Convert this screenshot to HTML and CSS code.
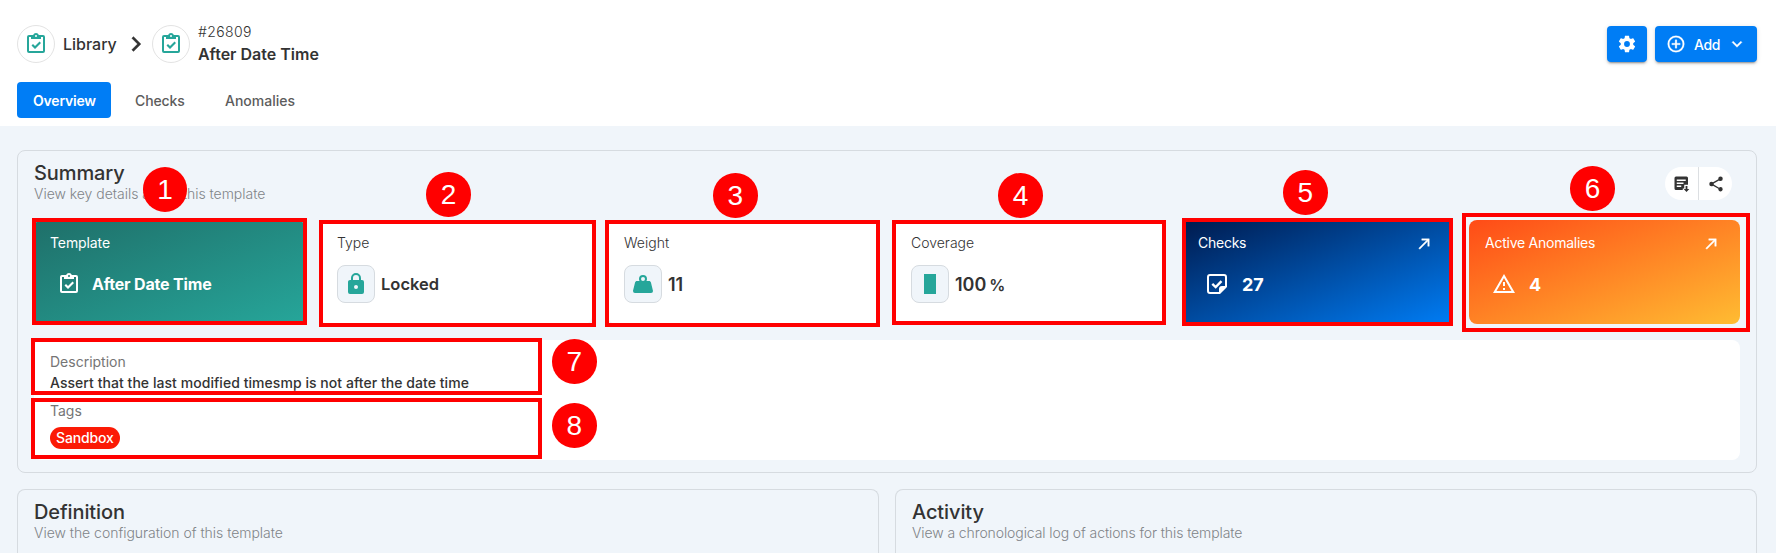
FILE: index.html
```html
<!DOCTYPE html>
<html lang="en">
<head>
<meta charset="utf-8">
<title>After Date Time</title>
<link rel="stylesheet" href="styles.css">
</head>
<body>
<svg class="defs" aria-hidden="true">
  <symbol id="clipboard" viewBox="0 0 24 24"><path d="M19,3H14.82C14.4,1.84 13.3,1 12,1C10.7,1 9.6,1.84 9.18,3H5A2,2 0 0,0 3,5V19A2,2 0 0,0 5,21H19A2,2 0 0,0 21,19V5A2,2 0 0,0 19,3M12,3A1,1 0 0,1 13,4A1,1 0 0,1 12,5A1,1 0 0,1 11,4A1,1 0 0,1 12,3M7,7H17V5H19V19H5V5H7V7M7.5,13.5L9,12L11,14L15.5,9.5L17,11L11,17L7.5,13.5Z"/></symbol>
  <symbol id="arrow" viewBox="0 0 24 24"><path d="M5,17.59L15.59,7H9V5H19V15H17V8.41L6.41,19L5,17.59Z" stroke="currentColor" stroke-width=".5"/></symbol>
</svg>
<header class="header">
  <div class="topbar">
    <nav class="crumbs">
      <span class="avatar"><svg class="i24"><use href="#clipboard"/></svg></span>
      <span class="crumb-label">Library</span>
      <svg class="crumb-sep" viewBox="0 0 24 24"><path d="M8.59,16.58L13.17,12L8.59,7.41L10,6L16,12L10,18L8.59,16.58Z" stroke="currentColor" stroke-width=".2"/></svg>
      <span class="avatar"><svg class="i24"><use href="#clipboard"/></svg></span>
      <div class="ident"><span class="ident-id">#26809</span><span class="ident-name">After Date Time</span></div>
    </nav>
    <div class="actions">
      <button class="btn btn-cog"><svg class="i20" viewBox="0 0 24 24"><path d="M12,15.5A3.5,3.5 0 0,1 8.5,12A3.5,3.5 0 0,1 12,8.5A3.5,3.5 0 0,1 15.5,12A3.5,3.5 0 0,1 12,15.5M19.43,12.97C19.47,12.65 19.5,12.33 19.5,12C19.5,11.67 19.47,11.34 19.43,11L21.54,9.37C21.73,9.22 21.78,8.95 21.66,8.73L19.66,5.27C19.54,5.05 19.27,4.96 19.05,5.05L16.56,6.05C16.04,5.66 15.5,5.32 14.87,5.07L14.5,2.42C14.46,2.18 14.25,2 14,2H10C9.75,2 9.54,2.18 9.5,2.42L9.13,5.07C8.5,5.32 7.96,5.66 7.44,6.05L4.95,5.05C4.73,4.96 4.46,5.05 4.34,5.27L2.34,8.73C2.21,8.95 2.27,9.22 2.46,9.37L4.57,11C4.53,11.34 4.5,11.67 4.5,12C4.5,12.33 4.53,12.65 4.57,12.97L2.46,14.63C2.27,14.78 2.21,15.05 2.34,15.27L4.34,18.73C4.46,18.95 4.73,19.03 4.95,18.95L7.44,17.94C7.96,18.34 8.5,18.68 9.13,18.93L9.5,21.58C9.54,21.82 9.75,22 10,22H14C14.25,22 14.46,21.82 14.5,21.58L14.87,18.93C15.5,18.67 16.04,18.34 16.56,17.94L19.05,18.95C19.27,19.03 19.54,18.95 19.66,18.73L21.66,15.27C21.78,15.05 21.73,14.78 21.54,14.63L19.43,12.97Z"/></svg></button>
      <button class="btn btn-add"><svg class="i20" viewBox="0 0 24 24"><path d="M12,20C7.59,20 4,16.41 4,12C4,7.59 7.59,4 12,4C16.41,4 20,7.59 20,12C20,16.41 16.41,20 12,20M12,2A10,10 0 0,0 2,12A10,10 0 0,0 12,22A10,10 0 0,0 22,12A10,10 0 0,0 12,2M13,7H11V11H7V13H11V17H13V13H17V11H13V7Z" stroke="currentColor" stroke-width=".3"/></svg><span class="add-label">Add</span><svg class="i20" viewBox="0 0 24 24"><path d="M7.41,8.58L12,13.17L16.59,8.58L18,10L12,16L6,10L7.41,8.58Z" stroke="currentColor" stroke-width=".4"/></svg></button>
    </div>
  </div>
  <div class="tabs">
    <span class="tab tab-active">Overview</span><span class="tab tab-checks">Checks</span><span class="tab tab-anom">Anomalies</span>
  </div>
</header>
<main class="main">
  <section class="panel summary">
    <div class="panel-head">
      <div>
        <h2 class="title t-summary">Summary</h2>
        <p class="sub s-summary">View key details about this template</p>
      </div>
      <div class="pill">
        <span class="pill-btn"><svg class="i18" viewBox="0 0 24 24"><path fill-rule="evenodd" d="M4,2H18A2,2 0 0 1 20,4V13H15V18H13V20H4A2,2 0 0 1 2,18V4A2,2 0 0 1 4,2M5,6V8H17V6H5M5,10V12H14V10H5M5,14V16H11V14H5M16.8,14.5H19.2V18.5H21.8L18,22.5L14.2,18.5H16.8Z"/></svg></span>
        <span class="pill-btn"><svg class="i18" viewBox="0 0 24 24"><path d="M18,16.08C17.24,16.08 16.56,16.38 16.04,16.85L8.91,12.7C8.96,12.47 9,12.24 9,12C9,11.76 8.96,11.53 8.91,11.3L15.96,7.19C16.5,7.69 17.21,8 18,8A3,3 0 0,0 21,5A3,3 0 0,0 18,2A3,3 0 0,0 15,5C15,5.24 15.04,5.47 15.09,5.7L8.04,9.81C7.5,9.31 6.79,9 6,9A3,3 0 0,0 3,12A3,3 0 0,0 6,15C6.79,15 7.5,14.69 8.04,14.19L15.16,18.34C15.11,18.55 15.08,18.77 15.08,19C15.08,20.61 16.39,21.91 18,21.91C19.61,21.91 20.92,20.61 20.92,19A2.92,2.92 0 0,0 18,16.08Z"/></svg></span>
      </div>
    </div>
    <div class="cards">
      <div class="card card-template">
        <div class="card-top"><span class="lbl l-template">Template</span></div>
        <div class="card-row"><span class="plain"><svg class="i24"><use href="#clipboard"/></svg></span><span class="val v-template">After Date Time</span></div>
      </div>
      <div class="card">
        <div class="card-top"><span class="lbl l-type">Type</span></div>
        <div class="card-row"><span class="box"><svg class="i24" viewBox="0 0 24 24"><path d="M12,17A2,2 0 0,0 14,15C14,13.89 13.1,13 12,13A2,2 0 0,0 10,15A2,2 0 0,0 12,17M18,8A2,2 0 0,1 20,10V20A2,2 0 0,1 18,22H6A2,2 0 0,1 4,20V10C4,8.89 4.9,8 6,8H7V6A5,5 0 0,1 12,1A5,5 0 0,1 17,6V8H18M12,3A3,3 0 0,0 9,6V8H15V6A3,3 0 0,0 12,3Z"/></svg></span><span class="val v-locked">Locked</span></div>
      </div>
      <div class="card">
        <div class="card-top"><span class="lbl l-weight">Weight</span></div>
        <div class="card-row"><span class="box"><svg class="i24" viewBox="0 0 24 24"><path d="M12,3A4,4 0 0,1 16,7C16,7.73 15.81,8.41 15.46,9H18C18.95,9 19.75,9.67 19.95,10.56C21.96,18.57 22,18.78 22,19A2,2 0 0,1 20,21H4A2,2 0 0,1 2,19C2,18.78 2.04,18.57 4.05,10.56C4.25,9.67 5.05,9 6,9H8.54C8.19,8.41 8,7.73 8,7A4,4 0 0,1 12,3M12,5A2,2 0 0,0 10,7A2,2 0 0,0 12,9A2,2 0 0,0 14,7A2,2 0 0,0 12,5Z"/></svg></span><span class="val num v-weight">11</span></div>
      </div>
      <div class="card">
        <div class="card-top"><span class="lbl l-coverage">Coverage</span></div>
        <div class="card-row"><span class="box"><span class="bar"></span></span><span class="val num v-coverage">100<span class="pct">%</span></span></div>
      </div>
      <div class="card card-checks">
        <div class="card-top"><span class="lbl l-checks">Checks</span><svg class="i18 arrow"><use href="#arrow"/></svg></div>
        <div class="card-row"><span class="plain"><svg class="i24" viewBox="0 0 24 24"><path fill-rule="evenodd" d="M5,2H19A3,3 0 0 1 22,5V15L15,22H5A3,3 0 0 1 2,19V5A3,3 0 0 1 5,2M5,4A1,1 0 0 0 4,5V19A1,1 0 0 0 5,20H14V17A3,3 0 0 1 17,14H20V5A1,1 0 0 0 19,4Z"/><path d="M7.3,11.8L10.7,15L16.5,9.2" fill="none" stroke="currentColor" stroke-width="2.4"/></svg></span><span class="val num v-checks">27</span></div>
      </div>
      <div class="card card-anom">
        <div class="card-top"><span class="lbl l-anom">Active Anomalies</span><svg class="i18 arrow"><use href="#arrow"/></svg></div>
        <div class="card-row"><span class="plain"><svg class="i24" viewBox="0 0 24 24"><path d="M12,2L1,21H23M12,6L19.53,19H4.47M11,10V14H13V10M11,16V18H13V16"/></svg></span><span class="val num v-anom">4</span></div>
      </div>
    </div>
    <div class="details">
      <div class="d-label d-desc">Description</div>
      <div class="d-text">Assert that the last modified timesmp is not after the date time</div>
      <div class="d-label d-tags">Tags</div>
      <span class="tag">Sandbox</span>
    </div>
  </section>
  <div class="lower">
    <section class="panel"><h2 class="title t-def">Definition</h2><p class="sub s-def">View the configuration of this template</p></section>
    <section class="panel"><h2 class="title t-act">Activity</h2><p class="sub s-act">View a chronological log of actions for this template</p></section>
  </div>
</main>
<div class="callouts">
  <i class="frame f1"></i><i class="frame f2"></i><i class="frame f3"></i><i class="frame f4"></i>
  <i class="frame f5"></i><i class="frame f6"></i><i class="frame f7"></i><i class="frame f8"></i>
  <b class="dot n1">1</b><b class="dot n2">2</b><b class="dot n3">3</b><b class="dot n4">4</b>
  <b class="dot n5">5</b><b class="dot n6">6</b><b class="dot n7">7</b><b class="dot n8">8</b>
</div>
</body>
</html>
```

FILE: styles.css
```css
* { box-sizing: border-box; }
html, body { margin: 0; height: 553px; overflow: hidden; }
body { position: relative; background: #f0f5fa; font-family: Inter, "Liberation Sans", sans-serif; font-size: 14px; color: #333; }
svg { fill: currentColor; display: block; flex: none; }
.defs { position: absolute; width: 0; height: 0; }
.i24 { width: 24px; height: 24px; }
.i20 { width: 20px; height: 20px; }
.i18 { width: 18px; height: 18px; }
span, h2, p, .d-label, .d-text { white-space: nowrap; }

.header { height: 126px; background: #fff; padding: 25px 19px 0 17px; }
.topbar { display: flex; justify-content: space-between; height: 38px; }
.crumbs { display: flex; align-items: center; }
.avatar { width: 38px; height: 38px; border: 1px solid #e3e3e3; border-radius: 50%; display: flex; align-items: center; justify-content: center; color: #26a69a; }
.avatar svg { margin-top: -1px; }
.crumb-label { width: 66px; padding-left: 8px; font-size: 16px; font-weight: 500; }
.crumb-sep { width: 30px; height: 30px; margin: 0 1px 0 0; }
.ident { display: flex; flex-direction: column; padding-left: 8px; }
.ident-id { font-size: 14px; line-height: 20px; font-weight: 300; letter-spacing: .4px; }
.ident-name { font-size: 16px; line-height: 24px; font-weight: 600; }
.actions { display: flex; gap: 8px; padding-top: 1px; }
.btn { height: 36px; border: 0; border-radius: 4px; background: #007df5; color: #fff; display: flex; align-items: center; padding: 0; font: 500 14px Inter, sans-serif; box-shadow: 0 3px 1px -2px rgba(0,0,0,.2), 0 2px 2px rgba(0,0,0,.14), 0 1px 5px rgba(0,0,0,.12); }
.btn-cog { width: 40px; justify-content: center; }
.btn-add { width: 102px; padding-left: 11px; }
.add-label { width: 41px; padding-left: 8px; text-align: left; letter-spacing: -.3px; }

.tabs { display: flex; margin-top: 19px; height: 36px; line-height: 37px; font-weight: 500; color: #5c5c5c; }
.tab { padding-left: 16px; }
.tab-active { width: 94px; border-radius: 4px; background: #007df5; color: #fff; font-weight: 600; letter-spacing: -.2px; }
.tab-checks { padding-left: 24px; width: 98px; letter-spacing: -.1px; }

.main { padding: 24px 19px 0 17px; }
.panel { border: 1px solid #d6dbe0; border-radius: 8px; padding: 9px 16px 0; }
.summary { height: 323px; }
.panel-head { display: flex; justify-content: space-between; height: 60px; }
.title { margin: 0; font-size: 20px; line-height: 26px; font-weight: 500; letter-spacing: -.1px; }
.sub { margin: 0; font-size: 14px; line-height: 16px; font-weight: 300; color: #808488; }
.s-summary, .s-def { letter-spacing: -.03px; }
.s-act { letter-spacing: -.1px; }
.pill { display: flex; width: 67px; height: 33px; margin: 7px 8px 0 0; border-radius: 17px; background: #fff; }
.pill-btn { flex: 1; display: flex; align-items: center; justify-content: center; }
.pill-btn + .pill-btn { border-left: 1px solid #dcdfe2; }

.cards { display: grid; grid-template-columns: repeat(6, 1fr); gap: 16px; }
.card { height: 104px; border-radius: 8px; background: #fff; padding: 13px 16px 0; }
.card-top { height: 32px; display: flex; justify-content: space-between; }
.lbl { font-size: 14px; line-height: 20px; font-weight: 300; }
.arrow { margin: 2px 4px 0 0; }
.card-row { display: flex; align-items: center; height: 38px; }
.box, .plain { width: 38px; height: 38px; display: flex; align-items: center; justify-content: center; flex: none; }
.plain svg { margin: -1px 1px 0 0; }
.box { border: 1px solid #d6dbe0; border-radius: 8px; background: #f0f5fa; color: #26a69a; }
.bar { width: 12px; height: 20px; background: #26a69a; }
.val { font-size: 16px; font-weight: 600; padding-left: 4px; }
.num { font-size: 18px; padding-left: 6px; }
.v-template { letter-spacing: -.17px; margin-top: -1px; }
.v-locked { font-size: 16.5px; letter-spacing: 0; padding-left: 6px; }
.pct { font-size: 16px; margin-left: 3px; }
.card-template, .card-checks, .card-anom { color: #fff; }
.card-template .lbl, .card-checks .lbl, .card-anom .lbl { font-weight: 400; }
.l-template { letter-spacing: -.1px; }
.l-checks, .l-anom { letter-spacing: -.25px; }
.card-template .val, .card-checks .val, .card-anom .val { font-weight: 700; }
.card-template { background: linear-gradient(to bottom right, #1f6f69, #26a69a); }
.card-checks { background: linear-gradient(to bottom right, #001a4d, #007df5); }
.card-anom { background: linear-gradient(to bottom right, #ff4b17, #ffbc32); }

.details { margin-top: 16px; height: 120px; border-radius: 8px; background: #fff; padding: 12px 16px 0; }
.d-label { font-size: 14px; line-height: 20px; color: #757575; }
.d-text { font-size: 14px; line-height: 21px; font-weight: 500; height: 29px; letter-spacing: .05px; }
.tag { display: block; margin-top: 6px; width: 70px; height: 22px; line-height: 22px; border-radius: 11px; background: #fb1a05; color: #fff; font-weight: 500; padding-left: 6px; letter-spacing: -.15px; }

.lower { display: grid; grid-template-columns: 1fr 1fr; gap: 16px; margin-top: 16px; }
.lower .panel { height: 64px; border-bottom: 0; border-radius: 8px 8px 0 0; }

/* numbered callouts lying over the page */
.frame { position: absolute; border: 4px solid #f00; }
.f1 { left: 32px; top: 218px; width: 275px; height: 107px; }
.f2 { left: 319px; top: 220px; width: 277px; height: 107px; }
.f3 { left: 605px; top: 220px; width: 275px; height: 107px; }
.f4 { left: 892px; top: 220px; width: 274px; height: 105px; }
.f5 { left: 1182px; top: 218px; width: 271px; height: 108px; }
.f6 { left: 1462px; top: 213px; width: 288px; height: 119px; }
.f7 { left: 31px; top: 338px; width: 511px; height: 57px; }
.f8 { left: 31px; top: 398px; width: 511px; height: 61px; }
.dot { position: absolute; width: 44.5px; height: 44.5px; border-radius: 50%; background: #f00; color: #fff; font: 400 28px/45px "Liberation Sans", Arial, sans-serif; text-align: center; }
.n1 { left: 142.8px; top: 167.2px; }
.n2 { left: 426.2px; top: 172.2px; }
.n3 { left: 713px; top: 173.3px; }
.n4 { left: 998.4px; top: 173.3px; }
.n5 { left: 1283px; top: 170.2px; }
.n6 { left: 1570.4px; top: 166.2px; }
.n7 { left: 552px; top: 339.3px; }
.n8 { left: 552px; top: 403.2px; }
```
